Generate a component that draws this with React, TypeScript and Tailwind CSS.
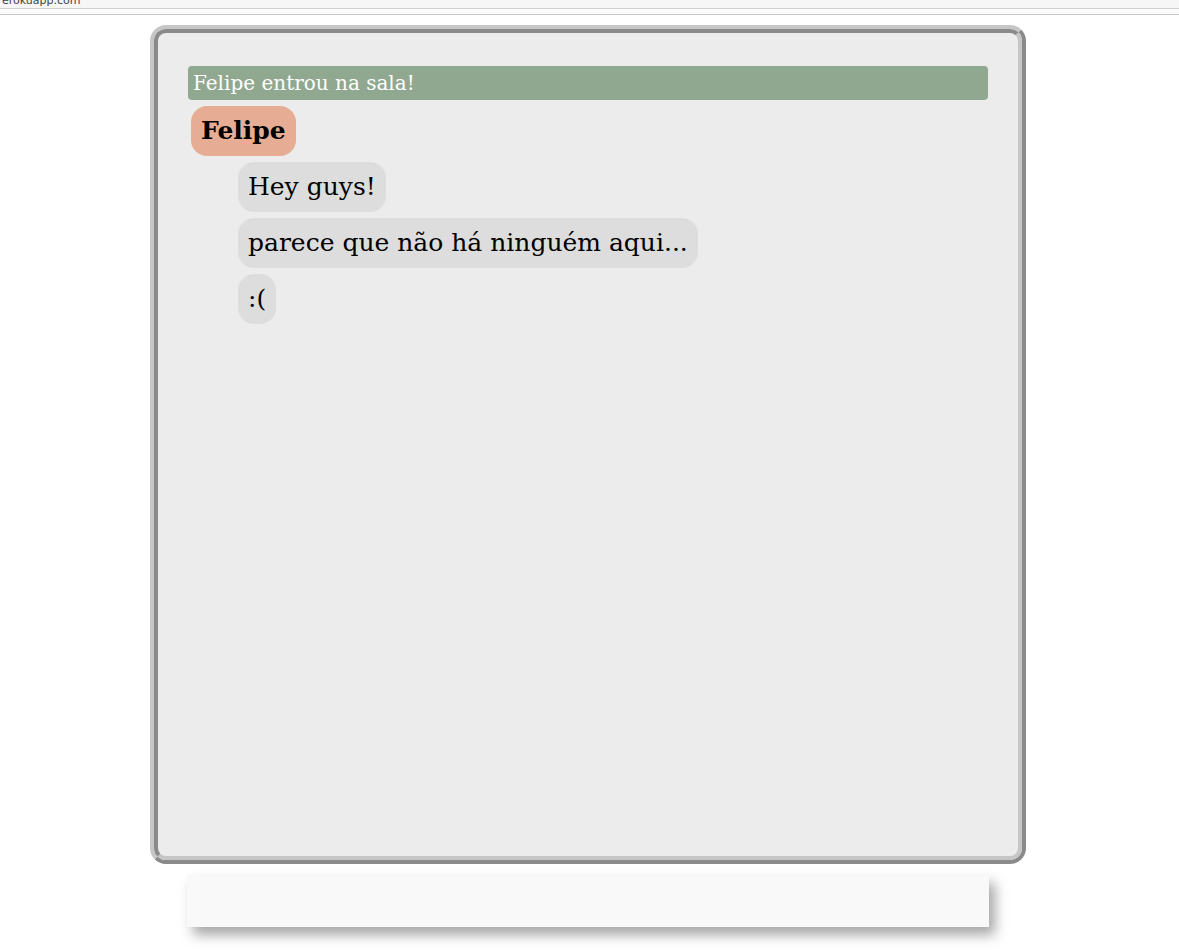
const messages = ['Hey guys!', 'parece que não há ninguém aqui...', ':(']

function App() {
	return (
		<div className="min-h-[951px] bg-white font-['DejaVu_Serif',serif]">
			<div className="h-[9px] overflow-hidden border-b border-[#cfcfcf] bg-[#f6f6f6]">
				<span className="-mt-[5px] block pl-[2px] font-['DejaVu_Sans',sans-serif] text-[11px] leading-[12px] text-[#444]">
					erokuapp.com
				</span>
			</div>
			<div className="h-[6px] border-b border-[#c8c8c8] bg-[#fbfbfb]" />

			<div className="ml-[150px] mt-[10px] w-[876px]">
				<div className="rounded-[16px] border-4 border-t-[#c6c6c6] border-l-[#c6c6c6] border-r-[#8a8a8a] border-b-[#8a8a8a]">
					<div className="h-[831px] rounded-[12px] border-4 border-t-[#8a8a8a] border-l-[#8a8a8a] border-r-[#c6c6c6] border-b-[#c6c6c6] bg-[#ececec] px-[30px] pt-[33px]">
						<div className="flex h-[34px] items-center rounded-[4px] bg-[#8fa88f] px-[5px] text-[20px] text-white">
							Felipe entrou na sala!
						</div>
						<div className="mt-[6px] flex flex-col items-start gap-[6px]">
							<div className="ml-[3px] flex h-[50px] items-center rounded-[16px] bg-[#e6ad94] px-[10px] text-[25px] font-bold text-black">
								Felipe
							</div>
							{messages.map((msg) => (
								<div
									key={msg}
									className="ml-[50px] flex h-[50px] items-center rounded-[16px] bg-[#dddddd] px-[10px] text-[25px] text-black"
								>
									{msg}
								</div>
							))}
						</div>
					</div>
				</div>
			</div>

			<div className="ml-[187px] mt-[11px] h-[52px] w-[802px] bg-[#f9f9f9] shadow-[6px_8px_12px_rgba(0,0,0,0.35)]" />
		</div>
	)
}

export default App
